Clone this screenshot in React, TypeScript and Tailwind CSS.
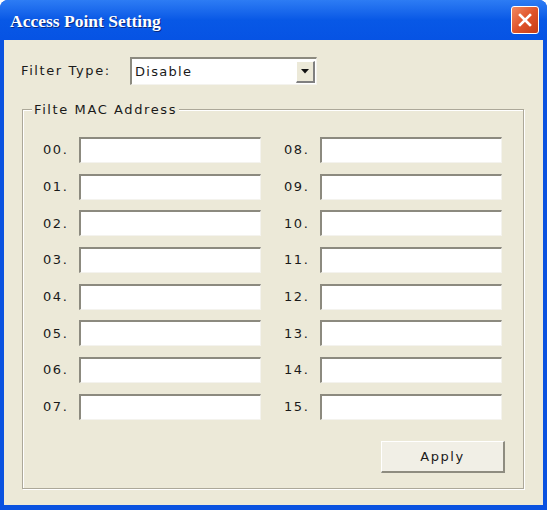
import React from 'react';

const left = ['00', '01', '02', '03', '04', '05', '06', '07'];
const right = ['08', '09', '10', '11', '12', '13', '14', '15'];

const ui = { fontFamily: '"DejaVu Sans", Verdana, sans-serif' };

function MacRow({ label }: { label: string }) {
  return (
    <div className="flex items-center">
      <span className="w-[36px] text-[13px] tracking-[1.6px] text-[#1a1a1a]">{label}.</span>
      <input
        className="h-[26px] w-[182px] bg-white border-t-2 border-l-2 border-b border-r border-t-[#8c8a7f] border-l-[#8c8a7f] border-b-[#f4f3ee] border-r-[#f4f3ee] outline-none"
        defaultValue=""
      />
    </div>
  );
}

function Column({ items }: { items: string[] }) {
  return (
    <div className="flex flex-col gap-[10.7px]">
      {items.map((n) => (
        <MacRow key={n} label={n} />
      ))}
    </div>
  );
}

export default function App() {
  return (
    <div className="w-[547px] h-[510px] bg-white">
      <div className="w-[547px] h-[510px] flex flex-col rounded-t-[8px] bg-[#0a52e0] px-[4px] pb-[5px] overflow-hidden">
        {/* TITLE BAR */}
        <div className="h-[40px] -mx-[4px] px-[10px] flex items-center justify-between bg-gradient-to-b from-[#2d7cf4] via-[#0858e6] to-[#0653e4]">
          <span
            className="text-white font-bold text-[17.5px] mt-[3px] [text-shadow:1px_1px_0_#0a2a80]"
            style={{ fontFamily: '"Liberation Serif", "Times New Roman", serif' }}
          >
            Access Point Setting
          </span>
          <div className="w-[28px] h-[28px] mr-[-2px] rounded-[3px] border border-white bg-gradient-to-br from-[#f08860] via-[#e0542a] to-[#c63c16] flex items-center justify-center">
            <svg width="16" height="16" viewBox="0 0 16 16">
              <path d="M3 3 L13 13 M13 3 L3 13" stroke="white" strokeWidth="2.6" strokeLinecap="square" />
            </svg>
          </div>
        </div>

        {/* BODY */}
        <div className="flex-1 bg-[#ece9d8] flex flex-col" style={ui}>
          <div className="flex items-center mt-[17px] pl-[17px]">
            <span className="w-[109px] text-[13px] tracking-[1.6px] text-[#1a1a1a]">Filter Type:</span>
            <div className="w-[187px] h-[28px] bg-white flex items-center border-t-2 border-l-2 border-b border-r border-t-[#8c8a7f] border-l-[#8c8a7f] border-b-[#f4f3ee] border-r-[#f4f3ee]">
              <span className="flex-1 pl-[3px] text-[13px] tracking-[1.3px] text-[#1a1a1a]">Disable</span>
              <div className="w-[19px] h-[22px] mr-[1px] bg-[#ece9d8] flex items-center justify-center border-t border-l border-t-white border-l-white border-b-2 border-r-2 border-b-[#808080] border-r-[#808080]">
                <svg width="8" height="5" viewBox="0 0 8 5">
                  <path d="M0 0 H8 L4 4.5 Z" fill="#111" />
                </svg>
              </div>
            </div>
          </div>

          {/* GROUP BOX */}
          <div className="relative flex-1 mt-[24px] ml-[18px] mr-[19px] mb-[16px] border border-[#aca899] shadow-[inset_1px_1px_0_#ffffff,1px_1px_0_#ffffff] pt-[27px] pl-[20px] pr-[21px]">
            <span className="absolute -top-[10px] left-[9px] px-[2px] bg-[#ece9d8] text-[13px] tracking-[1.6px] text-[#1a1a1a]">
              Filte MAC Address
            </span>
            <div className="flex gap-[23px]">
              <Column items={left} />
              <Column items={right} />
            </div>
            <div className="flex justify-end mt-[21px]">
              <button className="w-[124px] h-[32px] mr-[-3px] bg-[#f1efe6] border-t border-l border-t-white border-l-white border-b-2 border-r-2 border-b-[#8e8c80] border-r-[#8e8c80] text-[13px] tracking-[1.6px] text-[#1a1a1a]">
                Apply
              </button>
            </div>
          </div>
        </div>
      </div>
    </div>
  );
}
